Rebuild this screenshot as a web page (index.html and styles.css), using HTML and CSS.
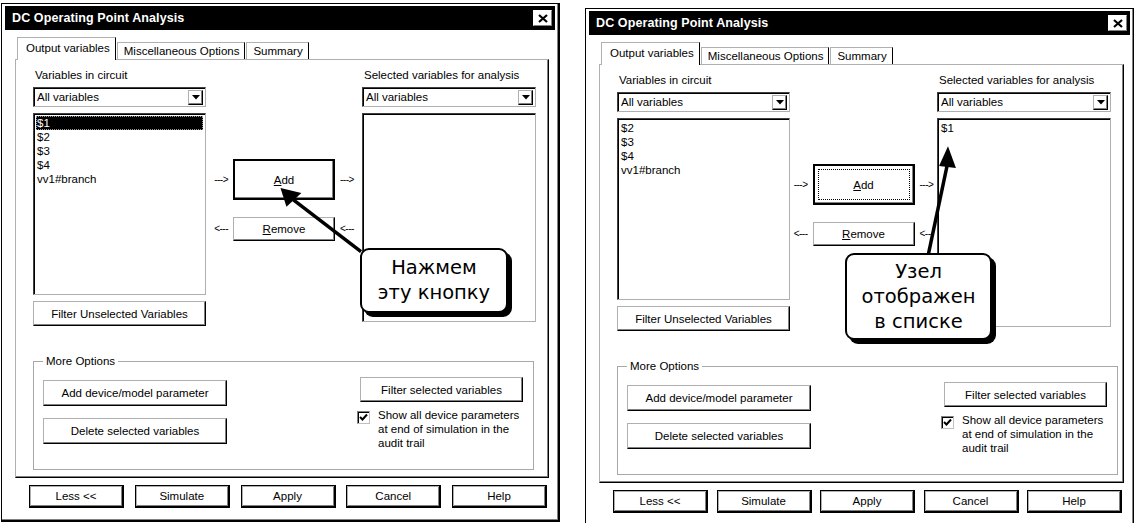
FILE: index.html
```html
<!DOCTYPE html>
<html lang="ru">

<head>
    <meta charset="UTF-8">
    <title>DC Operating Point Analysis</title>
    <link rel="stylesheet" href="styles.css">
</head>

<body>
    <div class="desk">

        <!-- before: $1 selected, about to press Add -->
        <div class="dialog dialog-before">
            <div class="titlebar">
                <span class="title">DC Operating Point Analysis</span>
                <span class="close">
                    <svg width="10" height="9" viewBox="0 0 10 9"><path d="M1 1 L9 8 M9 1 L1 8" stroke="#000" stroke-width="2.2" /></svg>
                </span>
            </div>
            <div class="tabs">
                <div class="tab active">Output variables</div>
                <div class="tab">Miscellaneous Options</div>
                <div class="tab">Summary</div>
            </div>
            <div class="panel">
                <div class="columns">
                    <div class="col">
                        <div class="caption">Variables in circuit</div>
                        <div class="combo">
                            <span class="combo-text">All variables</span>
                            <span class="combo-btn"><svg width="8" height="5" viewBox="0 0 8 5"><path d="M0 0 H8 L4 4.5 Z" fill="#000" /></svg></span>
                        </div>
                        <ul class="list list-short">
                            <li class="sel">$1</li>
                            <li>$2</li>
                            <li>$3</li>
                            <li>$4</li>
                            <li>vv1#branch</li>
                        </ul>
                        <button class="btn btn-filter">Filter Unselected Variables</button>
                    </div>
                    <div class="mid">
                        <div class="move move-add">
                            <span class="dash">---&gt;</span>
                            <button class="btn btn-add"><u>A</u>dd</button>
                            <span class="dash">---&gt;</span>
                        </div>
                        <div class="move move-remove">
                            <span class="dash">&lt;---</span>
                            <button class="btn btn-remove"><u>R</u>emove</button>
                            <span class="dash">&lt;---</span>
                        </div>
                    </div>
                    <div class="col">
                        <div class="caption">Selected variables for analysis</div>
                        <div class="combo">
                            <span class="combo-text">All variables</span>
                            <span class="combo-btn"><svg width="8" height="5" viewBox="0 0 8 5"><path d="M0 0 H8 L4 4.5 Z" fill="#000" /></svg></span>
                        </div>
                        <ul class="list list-tall"></ul>
                    </div>
                </div>
                <fieldset class="more">
                    <legend>More Options</legend>
                    <div class="more-left">
                        <button class="btn btn-wide">Add device/model parameter</button>
                        <button class="btn btn-wide">Delete selected variables</button>
                    </div>
                    <div class="more-right">
                        <button class="btn btn-filter-sel">Filter selected variables</button>
                        <div class="check">
                            <span class="check-box"><svg width="9" height="9" viewBox="0 0 9 9"><path d="M1 4 L3.5 6.5 L8 1.5" stroke="#000" stroke-width="2" fill="none" /></svg></span>
                            <span class="check-text">Show all device parameters at end of simulation in the audit trail</span>
                        </div>
                    </div>
                </fieldset>
            </div>
            <div class="actions">
                <button class="btn btn-action">Less &lt;&lt;</button>
                <button class="btn btn-action">Simulate</button>
                <button class="btn btn-action">Apply</button>
                <button class="btn btn-action">Cancel</button>
                <button class="btn btn-action">Help</button>
            </div>

            <svg class="pointer" viewBox="0 0 559 519">
                <line x1="293" y1="197" x2="361" y2="249" stroke="#000" stroke-width="3.5" />
                <polygon points="280,185 286,204 301,190" fill="#000" />
            </svg>
            <div class="callout callout-before">
                <span class="callout-line">Нажмем</span>
                <span class="callout-line">эту кнопку</span>
            </div>
        </div>

        <!-- after: $1 moved to the selected list -->
        <div class="dialog dialog-after">
            <div class="titlebar">
                <span class="title">DC Operating Point Analysis</span>
                <span class="close">
                    <svg width="10" height="9" viewBox="0 0 10 9"><path d="M1 1 L9 8 M9 1 L1 8" stroke="#000" stroke-width="2.2" /></svg>
                </span>
            </div>
            <div class="tabs">
                <div class="tab active">Output variables</div>
                <div class="tab">Miscellaneous Options</div>
                <div class="tab">Summary</div>
            </div>
            <div class="panel">
                <div class="columns">
                    <div class="col">
                        <div class="caption">Variables in circuit</div>
                        <div class="combo">
                            <span class="combo-text">All variables</span>
                            <span class="combo-btn"><svg width="8" height="5" viewBox="0 0 8 5"><path d="M0 0 H8 L4 4.5 Z" fill="#000" /></svg></span>
                        </div>
                        <ul class="list list-short">
                            <li>$2</li>
                            <li>$3</li>
                            <li>$4</li>
                            <li>vv1#branch</li>
                        </ul>
                        <button class="btn btn-filter">Filter Unselected Variables</button>
                    </div>
                    <div class="mid">
                        <div class="move move-add">
                            <span class="dash">---&gt;</span>
                            <button class="btn btn-add focused"><span class="focus-ring"><u>A</u>dd</span></button>
                            <span class="dash">---&gt;</span>
                        </div>
                        <div class="move move-remove">
                            <span class="dash">&lt;---</span>
                            <button class="btn btn-remove"><u>R</u>emove</button>
                            <span class="dash">&lt;---</span>
                        </div>
                    </div>
                    <div class="col">
                        <div class="caption">Selected variables for analysis</div>
                        <div class="combo">
                            <span class="combo-text">All variables</span>
                            <span class="combo-btn"><svg width="8" height="5" viewBox="0 0 8 5"><path d="M0 0 H8 L4 4.5 Z" fill="#000" /></svg></span>
                        </div>
                        <ul class="list list-tall">
                            <li>$1</li>
                        </ul>
                    </div>
                </div>
                <fieldset class="more">
                    <legend>More Options</legend>
                    <div class="more-left">
                        <button class="btn btn-wide">Add device/model parameter</button>
                        <button class="btn btn-wide">Delete selected variables</button>
                    </div>
                    <div class="more-right">
                        <button class="btn btn-filter-sel">Filter selected variables</button>
                        <div class="check">
                            <span class="check-box"><svg width="9" height="9" viewBox="0 0 9 9"><path d="M1 4 L3.5 6.5 L8 1.5" stroke="#000" stroke-width="2" fill="none" /></svg></span>
                            <span class="check-text">Show all device parameters at end of simulation in the audit trail</span>
                        </div>
                    </div>
                </fieldset>
            </div>
            <div class="actions">
                <button class="btn btn-action">Less &lt;&lt;</button>
                <button class="btn btn-action">Simulate</button>
                <button class="btn btn-action">Apply</button>
                <button class="btn btn-action">Cancel</button>
                <button class="btn btn-action">Help</button>
            </div>

            <svg class="pointer" viewBox="0 0 550 519">
                <line x1="363" y1="158" x2="344" y2="248" stroke="#000" stroke-width="3.5" />
                <polygon points="364,138 355,158 372,160" fill="#000" />
            </svg>
            <div class="callout callout-after">
                <span class="callout-line">Узел</span>
                <span class="callout-line">отображен</span>
                <span class="callout-line">в списке</span>
            </div>
        </div>

    </div>
</body>

</html>
```

FILE: styles.css
```css
body {
    margin: 0;
    background: #fff;
    color: #000;
    font-family: "Liberation Sans", Arial, sans-serif;
    font-size: 11.5px;
    line-height: 14px;
    overflow: hidden;
}

.desk {
    display: flex;
    align-items: flex-start;
    gap: 25px;
    padding: 3px 0 0 1px;
}

/* window frame */

.dialog {
    position: relative;
    flex: none;
    width: 559px;
    height: 519px;
    box-sizing: border-box;
    padding: 2px 3px;
    background: #fff;
    border: 1px solid #000;
    border-width: 1px 2px 2px 1px;
    box-shadow: inset -1px -1px #808080;
}

.dialog-after {
    width: 550px;
    margin-top: 5px;
}

.titlebar {
    display: flex;
    align-items: center;
    justify-content: space-between;
    height: 24px;
    padding: 0 3px 0 7px;
    background: #000;
    color: #fff;
}

.title {
    font-weight: bold;
    font-size: 12.5px;
    letter-spacing: 0.1px;
}

.close {
    display: flex;
    align-items: center;
    justify-content: center;
    width: 17px;
    height: 14px;
    background: #fff;
    border: 1px solid;
    border-color: #fff #808080 #808080 #fff;
}

/* tabs */

.tabs {
    display: flex;
    align-items: flex-end;
    height: 21px;
    margin-top: 8px;
    padding-left: 12px;
    position: relative;
    z-index: 1;
}

.tab {
    height: 16px;
    padding: 0 5px 0 6px;
    line-height: 16px;
    background: #fff;
    border: 1px solid;
    border-bottom: none;
    border-color: #b0b0b0 #000 #000 #b0b0b0;
    margin-left: 1px;
}

.tab.active {
    height: 22px;
    margin-bottom: -1px;
    margin-left: 0;
    padding: 0 5px 0 8px;
    line-height: 20px;
}

/* panel */

.panel {
    margin: 0 6px 0 10px;
    padding: 8px 12px 12px 17px;
    border: 1px solid;
    border-color: #b0b0b0 #000 #000 #b0b0b0;
    box-shadow: inset -1px -1px #808080;
    height: 419px;
    box-sizing: border-box;
}

.columns {
    display: grid;
    grid-template-columns: 173px 1fr 174px;
}

.caption {
    padding-left: 2px;
    height: 14px;
}

.combo {
    display: flex;
    align-items: center;
    justify-content: space-between;
    height: 20px;
    margin-top: 5px;
    box-sizing: border-box;
    border: 1px solid;
    border-color: #404040 #b0b0b0 #b0b0b0 #404040;
    box-shadow: inset 1px 1px #000;
    padding: 0 2px 0 3px;
}

.combo-btn {
    display: flex;
    align-items: center;
    justify-content: center;
    width: 13px;
    height: 13px;
    border: 1px solid;
    border-color: #b0b0b0 #000 #000 #b0b0b0;
    box-shadow: inset -1px -1px #808080;
}

.list {
    list-style: none;
    margin: 6px 0 0;
    padding: 2px 2px;
    box-sizing: border-box;
    border: 1px solid;
    border-color: #404040 #b0b0b0 #b0b0b0 #404040;
    box-shadow: inset 1px 1px #000;
    line-height: 14px;
}

.list li {
    padding-left: 1px;
    height: 14px;
}

.list li.sel {
    background: #000;
    color: #fff;
    outline: 1px dotted #999;
    outline-offset: -1px;
}

.list-short {
    height: 182px;
}

.list-tall {
    height: 209px;
}

/* buttons */

.btn {
    font: inherit;
    color: #000;
    background: #fff;
    padding: 0;
    border: 1px solid;
    border-color: #b0b0b0 #000 #000 #b0b0b0;
    box-shadow: inset -1px -1px #808080;
    cursor: pointer;
}

.btn-filter {
    display: block;
    width: 173px;
    height: 25px;
    margin-top: 6px;
}

.mid {
    padding-top: 91px;
}

.move {
    display: flex;
    align-items: center;
    justify-content: center;
    gap: 5px;
}

.dash {
    font-size: 10px;
    letter-spacing: -0.5px;
}

.btn-add {
    width: 102px;
    height: 41px;
    border: 2px solid #000;
    box-shadow: inset -1px -1px #808080;
}

.focused {
    padding: 3px;
}

.focus-ring {
    display: flex;
    align-items: center;
    justify-content: center;
    height: 100%;
    border: 1px dotted #000;
    box-sizing: border-box;
}

.move-remove {
    margin-top: 17px;
}

.btn-remove {
    width: 102px;
    height: 24px;
}

/* more options */

.more {
    margin: 28px 0 0;
    padding: 12px 10px 19px 9px;
    border: 1px solid #a8a8a8;
    display: flex;
    justify-content: space-between;
    align-items: flex-start;
    width: 501px;
    box-sizing: border-box;
}

.more legend {
    padding: 0 3px;
}

.more-left {
    display: flex;
    flex-direction: column;
    gap: 12px;
}

.btn-wide {
    width: 184px;
    height: 26px;
}

.more-right {
    width: 166px;
    margin-top: -3px;
}

.btn-filter-sel {
    display: block;
    width: 163px;
    height: 25px;
    margin-left: 3px;
}

.check {
    display: flex;
    align-items: flex-start;
    gap: 8px;
    margin-top: 6px;
}

.check-box {
    flex: none;
    display: flex;
    align-items: center;
    justify-content: center;
    width: 13px;
    height: 13px;
    box-sizing: border-box;
    margin-top: 3px;
    border: 1px solid;
    border-color: #808080 #c0c0c0 #c0c0c0 #808080;
    box-shadow: inset 1px 1px #000;
}

.check-text {
    width: 150px;
}

/* bottom row */

.actions {
    display: flex;
    justify-content: space-between;
    padding: 7px 8px 0 24px;
}

.btn-action {
    width: 95px;
    height: 23px;
    border: 1px solid #000;
    border-width: 1px 2px 2px 1px;
    box-shadow: inset 1px 1px #b0b0b0, inset -1px -1px #808080;
}

/* annotations */

.pointer {
    position: absolute;
    left: 0;
    top: 0;
    width: 100%;
    height: 100%;
    pointer-events: none;
    z-index: 2;
}

.callout {
    position: absolute;
    z-index: 3;
    box-sizing: border-box;
    background: #fff;
    border: 2px solid #000;
    border-radius: 9px;
    box-shadow: 4px 4px 0 #000;
    font-family: "DejaVu Sans", "Noto Sans", sans-serif;
    font-size: 19.5px;
    text-align: center;
}

.callout-line {
    display: block;
    height: 25px;
    line-height: 25px;
}

.callout-before {
    left: 358px;
    top: 244px;
    width: 148px;
    height: 65px;
    padding-top: 5px;
}

.callout-after {
    left: 259px;
    top: 244px;
    width: 147px;
    height: 87px;
    padding-top: 4px;
}
```
